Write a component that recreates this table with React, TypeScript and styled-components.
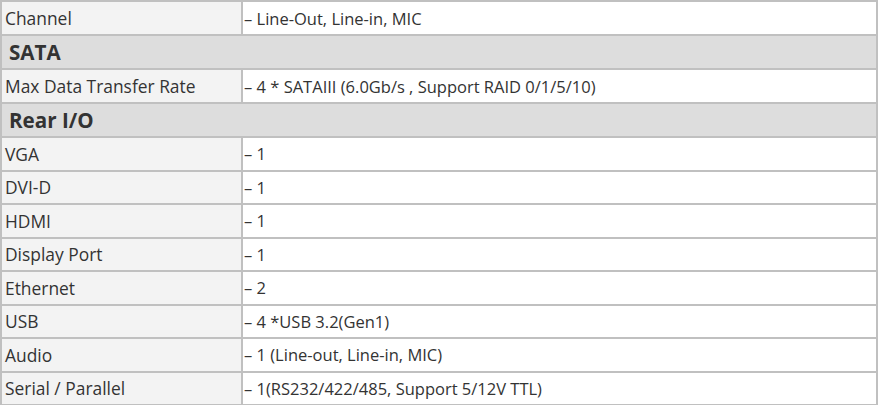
import React from "react";
import styled, { createGlobalStyle } from "styled-components";

const Global = createGlobalStyle`
  html, body { margin: 0; padding: 0; background: #ffffff; }
  body { font-family: "Open Sans", "Liberation Sans", sans-serif; }
`;

const Table = styled.div`
  width: 878px;
  box-sizing: border-box;
  display: grid;
  grid-template-columns: 239px 1fr;
  grid-template-rows: repeat(4, 32px);
  grid-auto-rows: 31.5px;
  gap: 2px;
  padding: 2px;
  background: #c0c0c0;
`;

const Label = styled.div`
  background: #f3f3f3;
  color: #333333;
  font-size: 17.4px;
  display: flex;
  align-items: center;
  padding-left: 3px;
  white-space: nowrap;
`;

const Value = styled.div`
  background: #ffffff;
  color: #333333;
  font-size: 16.5px;
  display: flex;
  align-items: center;
  padding-left: 1px;
  white-space: nowrap;
`;

const Section = styled.div`
  grid-column: 1 / -1;
  background: #dddddd;
  color: #333333;
  font-size: 20.6px;
  font-weight: 700;
  display: flex;
  align-items: center;
  padding-left: 7px;
`;

type Row = { section?: string; label?: string; value?: string };

const rows: Row[] = [
  { label: "Channel", value: "– Line-Out, Line-in, MIC" },
  { section: "SATA" },
  { label: "Max Data Transfer Rate", value: "– 4 * SATAIII (6.0Gb/s , Support RAID 0/1/5/10)" },
  { section: "Rear I/O" },
  { label: "VGA", value: "– 1" },
  { label: "DVI-D", value: "– 1" },
  { label: "HDMI", value: "– 1" },
  { label: "Display Port", value: "– 1" },
  { label: "Ethernet", value: "– 2" },
  { label: "USB", value: "– 4 *USB 3.2(Gen1)" },
  { label: "Audio", value: "– 1 (Line-out, Line-in, MIC)" },
  { label: "Serial / Parallel", value: "– 1(RS232/422/485, Support 5/12V TTL)" },
];

export default function App() {
  return (
    <>
      <Global />
      <Table>
        {rows.map((r, i) =>
          r.section ? (
            <Section key={i}>{r.section}</Section>
          ) : (
            <React.Fragment key={i}>
              <Label>{r.label}</Label>
              <Value>{r.value}</Value>
            </React.Fragment>
          )
        )}
      </Table>
    </>
  );
}
